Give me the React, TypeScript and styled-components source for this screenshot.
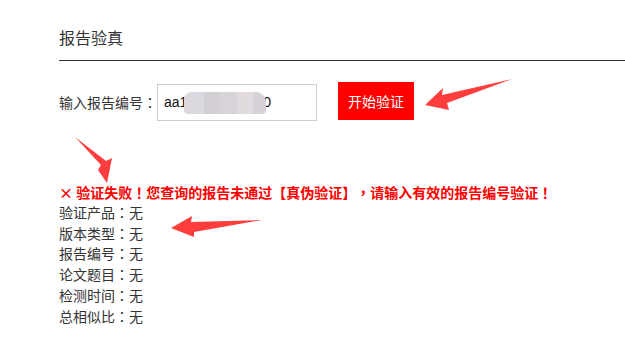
import React from "react";
import styled, { createGlobalStyle } from "styled-components";

const GlobalStyle = createGlobalStyle`
  html, body {
    margin: 0;
    padding: 0;
    background: #fff;
  }
  body {
    font-family: "Noto Sans CJK SC", "Liberation Sans", sans-serif;
    color: #333;
    text-spacing-trim: space-all;
  }
`;

const fields = ["验证产品", "版本类型", "报告编号", "论文题目", "检测时间", "总相似比"];

// mosaic colours over the hidden part of the report number
const mosaic = [
  ["#ddd7dd", 0, 20],
  ["#d9d9df", 20, 55],
  ["#d3cfd4", 55, 100],
  ["#d7d3d8", 100, 145],
  ["#e1dbe0", 145, 190],
  ["#d6d2d7", 190, 225],
];

const App = () => {
  const stops = mosaic
    .map(([c, a, b]) => `${c} ${Number(a) / 2.25}% ${Number(b) / 2.25}%`)
    .join(", ");

  return (
    <Page>
      <GlobalStyle />
      <Header>
        <Title>报告验真</Title>
      </Header>
      <FormRow>
        <Label>
          输入报告编号<Punct>：</Punct>
        </Label>
        <InputBox>
          <InputText>aa1</InputText>
          <Mosaic style={{ background: `linear-gradient(90deg, ${stops})` }} />
          <InputText>0</InputText>
        </InputBox>
        <Button>开始验证</Button>
      </FormRow>
      <Result>
        <ErrorLine>
          × 验证失败<Punct>！</Punct>您查询的报告未通过<Punct>【</Punct>真伪验证
          <Punct>】</Punct>
          <Punct>，</Punct>请输入有效的报告编号验证<Punct>！</Punct>
        </ErrorLine>
        {fields.map((f) => (
          <Row key={f}>
            {f}
            <Punct>：</Punct>无
          </Row>
        ))}
      </Result>
      <Arrows viewBox="0 0 625 356" width="625" height="356">
        <polygon points="425,105 443,88 442,95 512,79 447,103 449,110" />
        <polygon points="107,183 98,170 101,165 75,137 106,161 112,158" />
        <polygon points="171,228 192,216 191,222 262,220 194,232 194,237" />
      </Arrows>
    </Page>
  );
};

export default App;

const Page = styled.div`
  position: relative;
  width: 625px;
  height: 356px;
  padding-left: 59px;
  box-sizing: border-box;
  overflow: hidden;
`;

const Header = styled.div`
  padding-top: 26px;
  padding-bottom: 12px;
  border-bottom: 1px solid #333;
`;

const Title = styled.div`
  font-size: 16px;
  line-height: 22px;
  color: #333;
`;

const Punct = styled.span`
  font-family: "Noto Sans CJK TC", "Noto Sans CJK SC", sans-serif;
`;

const FormRow = styled.div`
  display: flex;
  align-items: center;
  margin-top: 21px;
  height: 39px;
`;

const Label = styled.span`
  font-size: 14px;
  line-height: 20px;
  color: #333;
`;

const InputBox = styled.div`
  display: flex;
  align-items: center;
  width: 160px;
  height: 37px;
  box-sizing: border-box;
  border: 1px solid #ccc;
  padding-left: 6px;
  margin-top: 1px;
`;

const InputText = styled.span`
  font-family: "Liberation Sans", Arial, sans-serif;
  font-size: 14px;
  color: #111;
`;

const Mosaic = styled.span`
  display: inline-block;
  width: 82px;
  height: 22px;
  margin-left: -3px;
  margin-right: -3px;
  margin-top: 2px;
  border-radius: 8px 10px 4px 4px;
  filter: blur(0.6px);
`;

const Button = styled.button`
  width: 76px;
  height: 38px;
  margin-left: 21px;
  margin-bottom: 2px;
  border: none;
  background: #ff0000;
  color: #fff;
  font-family: "Noto Sans CJK SC", sans-serif;
  font-size: 14px;
  padding: 0;
`;

const Result = styled.div`
  margin-top: 61px;
  font-size: 14px;
`;

const ErrorLine = styled.div`
  color: #ff0000;
  font-weight: bold;
  line-height: 21px;
  margin-bottom: -1px;
`;

const Row = styled.div`
  color: #333;
  line-height: 20.7px;
`;

const Arrows = styled.svg`
  position: absolute;
  top: 0;
  left: 0;
  pointer-events: none;

  polygon {
    fill: #ff3d3d;
  }
`;
